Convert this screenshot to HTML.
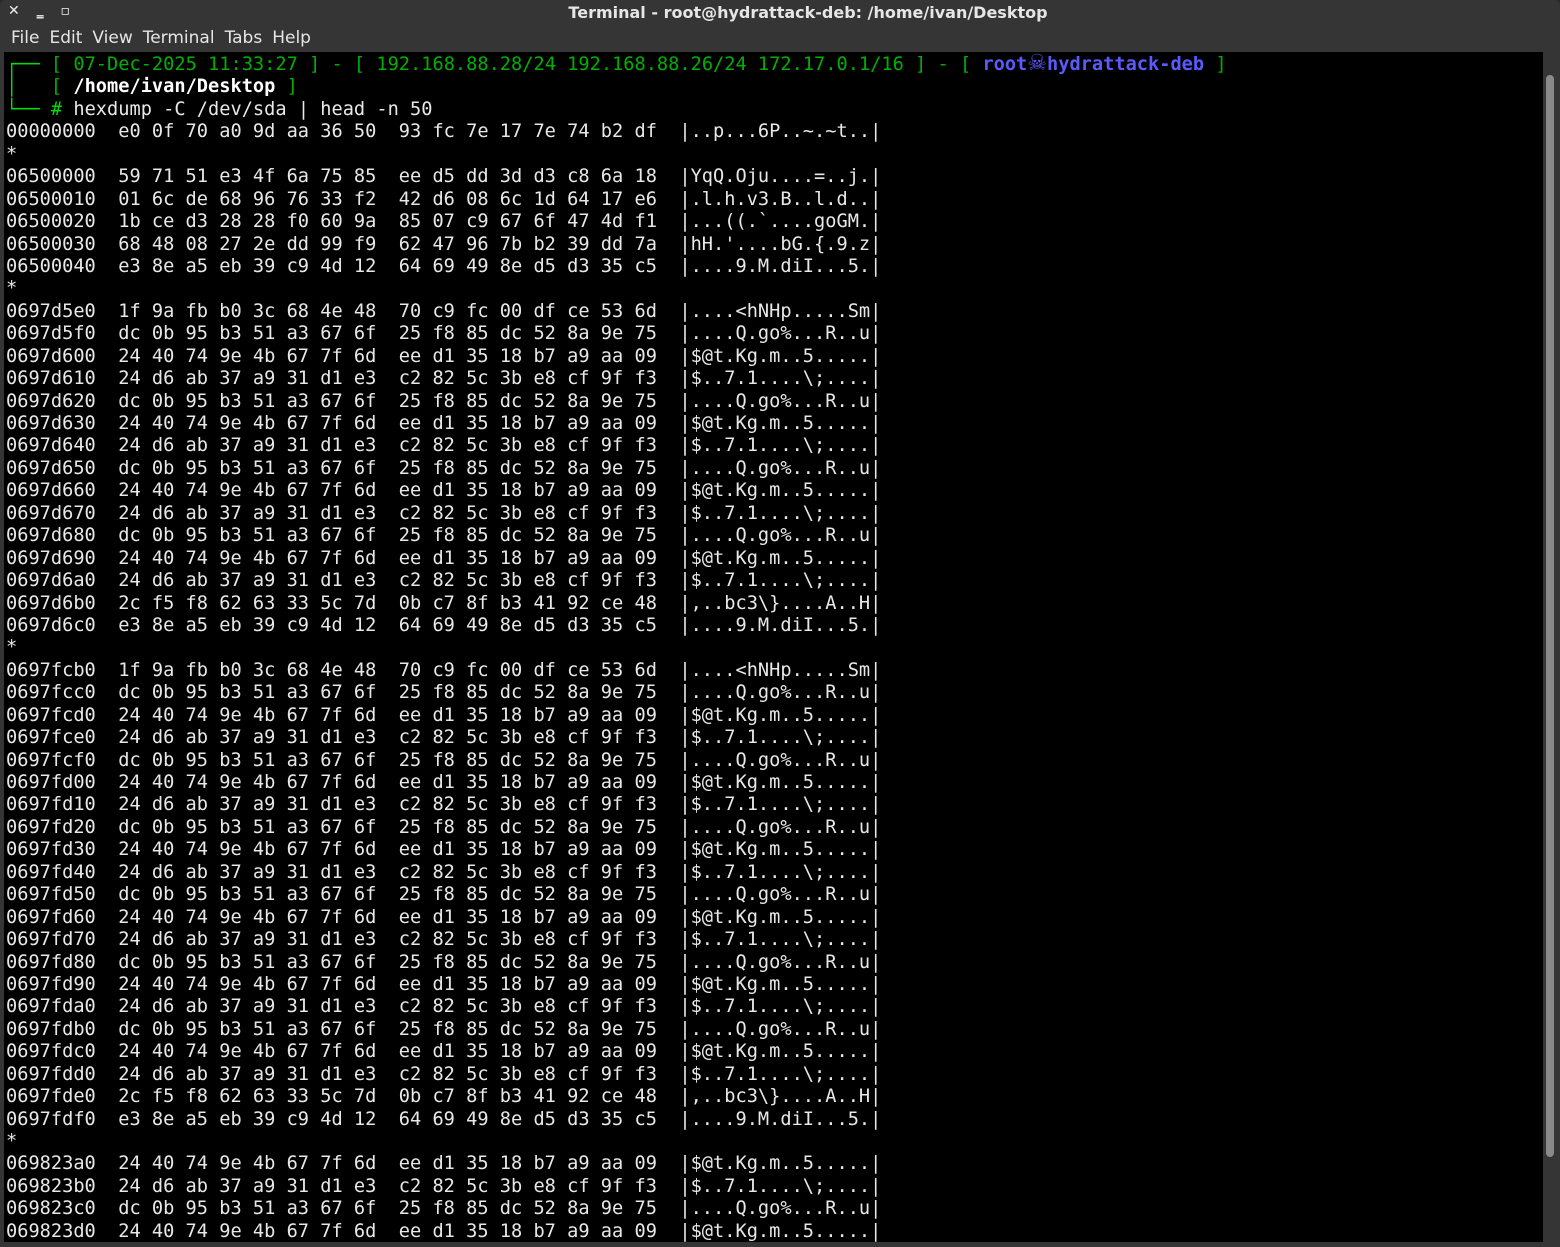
<!DOCTYPE html>
<html><head><meta charset="utf-8"><style>
html,body{margin:0;padding:0;background:#2b2b2b;width:1560px;height:1247px;overflow:hidden}
.win{position:absolute;left:0;top:0;width:1560px;height:1247px;background:#353535;border-radius:6px 6px 0 0}
.title{position:absolute;left:0;top:0;width:1560px;height:26px;text-align:center;color:#e6e6e6;font:bold 16px "DejaVu Sans","Liberation Sans",sans-serif;line-height:26px;padding-left:56px;box-sizing:border-box}
.btns{position:absolute;left:8px;top:3px;color:#eee;font:bold 14px "DejaVu Sans",sans-serif;letter-spacing:6px}
.menu{position:absolute;left:11px;top:27px;color:#e6e6e6;font:17px "DejaVu Sans","Liberation Sans",sans-serif;line-height:22px}
.menu span{margin-right:10px}
.term{position:absolute;left:4px;top:52px;width:1539px;height:1190px;background:#000;overflow:hidden}
.sb{position:absolute;left:1546px;top:75px;width:8px;height:1082px;background:#8a8a8a;border-radius:4px}
pre{margin:0;position:absolute;left:2px;top:2px;font:18.65px "DejaVu Sans Mono","Liberation Mono",monospace;line-height:22.43px;color:#e8e8e8;white-space:pre}
.g{color:#00b000}.G{color:#00dd00}.b{color:#5a5aff;font-weight:bold}.w{color:#fff;font-weight:bold}
.sk{font:22px "DejaVu Sans",sans-serif;line-height:10px;color:#5a5aff}
</style></head><body><div class="win">
<div class="btns">✕ ‗ ▫</div>
<div class="title">Terminal - root@hydrattack-deb: /home/ivan/Desktop</div>
<div class="menu"><span>File</span><span>Edit</span><span>View</span><span>Terminal</span><span>Tabs</span><span>Help</span></div>
<div class="term"><pre><span class="G">┌──</span> <span class="g">[ 07-Dec-2025 11:33:27 ] - [ 192.168.88.28/24 192.168.88.26/24 172.17.0.1/16 ] - [ </span><span class="b">root</span><span class="sk">☠</span><span class="b">hydrattack-deb</span><span class="g"> ]</span>
<span class="G">│</span>   <span class="g">[ </span><span class="w">/home/ivan/Desktop</span><span class="g"> ]</span>
<span class="G">└──</span> <span class="G">#</span> hexdump -C /dev/sda | head -n 50
00000000  e0 0f 70 a0 9d aa 36 50  93 fc 7e 17 7e 74 b2 df  |..p...6P..~.~t..|
*
06500000  59 71 51 e3 4f 6a 75 85  ee d5 dd 3d d3 c8 6a 18  |YqQ.Oju....=..j.|
06500010  01 6c de 68 96 76 33 f2  42 d6 08 6c 1d 64 17 e6  |.l.h.v3.B..l.d..|
06500020  1b ce d3 28 28 f0 60 9a  85 07 c9 67 6f 47 4d f1  |...((.`....goGM.|
06500030  68 48 08 27 2e dd 99 f9  62 47 96 7b b2 39 dd 7a  |hH.'....bG.{.9.z|
06500040  e3 8e a5 eb 39 c9 4d 12  64 69 49 8e d5 d3 35 c5  |....9.M.diI...5.|
*
0697d5e0  1f 9a fb b0 3c 68 4e 48  70 c9 fc 00 df ce 53 6d  |....&lt;hNHp.....Sm|
0697d5f0  dc 0b 95 b3 51 a3 67 6f  25 f8 85 dc 52 8a 9e 75  |....Q.go%...R..u|
0697d600  24 40 74 9e 4b 67 7f 6d  ee d1 35 18 b7 a9 aa 09  |$@t.Kg.m..5.....|
0697d610  24 d6 ab 37 a9 31 d1 e3  c2 82 5c 3b e8 cf 9f f3  |$..7.1....\;....|
0697d620  dc 0b 95 b3 51 a3 67 6f  25 f8 85 dc 52 8a 9e 75  |....Q.go%...R..u|
0697d630  24 40 74 9e 4b 67 7f 6d  ee d1 35 18 b7 a9 aa 09  |$@t.Kg.m..5.....|
0697d640  24 d6 ab 37 a9 31 d1 e3  c2 82 5c 3b e8 cf 9f f3  |$..7.1....\;....|
0697d650  dc 0b 95 b3 51 a3 67 6f  25 f8 85 dc 52 8a 9e 75  |....Q.go%...R..u|
0697d660  24 40 74 9e 4b 67 7f 6d  ee d1 35 18 b7 a9 aa 09  |$@t.Kg.m..5.....|
0697d670  24 d6 ab 37 a9 31 d1 e3  c2 82 5c 3b e8 cf 9f f3  |$..7.1....\;....|
0697d680  dc 0b 95 b3 51 a3 67 6f  25 f8 85 dc 52 8a 9e 75  |....Q.go%...R..u|
0697d690  24 40 74 9e 4b 67 7f 6d  ee d1 35 18 b7 a9 aa 09  |$@t.Kg.m..5.....|
0697d6a0  24 d6 ab 37 a9 31 d1 e3  c2 82 5c 3b e8 cf 9f f3  |$..7.1....\;....|
0697d6b0  2c f5 f8 62 63 33 5c 7d  0b c7 8f b3 41 92 ce 48  |,..bc3\}....A..H|
0697d6c0  e3 8e a5 eb 39 c9 4d 12  64 69 49 8e d5 d3 35 c5  |....9.M.diI...5.|
*
0697fcb0  1f 9a fb b0 3c 68 4e 48  70 c9 fc 00 df ce 53 6d  |....&lt;hNHp.....Sm|
0697fcc0  dc 0b 95 b3 51 a3 67 6f  25 f8 85 dc 52 8a 9e 75  |....Q.go%...R..u|
0697fcd0  24 40 74 9e 4b 67 7f 6d  ee d1 35 18 b7 a9 aa 09  |$@t.Kg.m..5.....|
0697fce0  24 d6 ab 37 a9 31 d1 e3  c2 82 5c 3b e8 cf 9f f3  |$..7.1....\;....|
0697fcf0  dc 0b 95 b3 51 a3 67 6f  25 f8 85 dc 52 8a 9e 75  |....Q.go%...R..u|
0697fd00  24 40 74 9e 4b 67 7f 6d  ee d1 35 18 b7 a9 aa 09  |$@t.Kg.m..5.....|
0697fd10  24 d6 ab 37 a9 31 d1 e3  c2 82 5c 3b e8 cf 9f f3  |$..7.1....\;....|
0697fd20  dc 0b 95 b3 51 a3 67 6f  25 f8 85 dc 52 8a 9e 75  |....Q.go%...R..u|
0697fd30  24 40 74 9e 4b 67 7f 6d  ee d1 35 18 b7 a9 aa 09  |$@t.Kg.m..5.....|
0697fd40  24 d6 ab 37 a9 31 d1 e3  c2 82 5c 3b e8 cf 9f f3  |$..7.1....\;....|
0697fd50  dc 0b 95 b3 51 a3 67 6f  25 f8 85 dc 52 8a 9e 75  |....Q.go%...R..u|
0697fd60  24 40 74 9e 4b 67 7f 6d  ee d1 35 18 b7 a9 aa 09  |$@t.Kg.m..5.....|
0697fd70  24 d6 ab 37 a9 31 d1 e3  c2 82 5c 3b e8 cf 9f f3  |$..7.1....\;....|
0697fd80  dc 0b 95 b3 51 a3 67 6f  25 f8 85 dc 52 8a 9e 75  |....Q.go%...R..u|
0697fd90  24 40 74 9e 4b 67 7f 6d  ee d1 35 18 b7 a9 aa 09  |$@t.Kg.m..5.....|
0697fda0  24 d6 ab 37 a9 31 d1 e3  c2 82 5c 3b e8 cf 9f f3  |$..7.1....\;....|
0697fdb0  dc 0b 95 b3 51 a3 67 6f  25 f8 85 dc 52 8a 9e 75  |....Q.go%...R..u|
0697fdc0  24 40 74 9e 4b 67 7f 6d  ee d1 35 18 b7 a9 aa 09  |$@t.Kg.m..5.....|
0697fdd0  24 d6 ab 37 a9 31 d1 e3  c2 82 5c 3b e8 cf 9f f3  |$..7.1....\;....|
0697fde0  2c f5 f8 62 63 33 5c 7d  0b c7 8f b3 41 92 ce 48  |,..bc3\}....A..H|
0697fdf0  e3 8e a5 eb 39 c9 4d 12  64 69 49 8e d5 d3 35 c5  |....9.M.diI...5.|
*
069823a0  24 40 74 9e 4b 67 7f 6d  ee d1 35 18 b7 a9 aa 09  |$@t.Kg.m..5.....|
069823b0  24 d6 ab 37 a9 31 d1 e3  c2 82 5c 3b e8 cf 9f f3  |$..7.1....\;....|
069823c0  dc 0b 95 b3 51 a3 67 6f  25 f8 85 dc 52 8a 9e 75  |....Q.go%...R..u|
069823d0  24 40 74 9e 4b 67 7f 6d  ee d1 35 18 b7 a9 aa 09  |$@t.Kg.m..5.....|</pre></div>
<div class="sb"></div>
</div></body></html>
